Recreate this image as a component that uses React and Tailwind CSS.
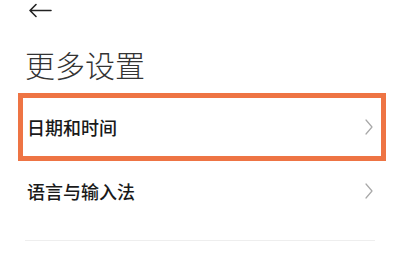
const font = { fontFamily: '"Noto Sans CJK SC", "Noto Sans", sans-serif' };

function Chevron() {
  return (
    <svg width="8" height="16" viewBox="0 0 8 16" fill="none">
      <path d="M1 1l6 7-6 7" stroke="#a8a8a8" strokeWidth="1.2" strokeLinecap="round" strokeLinejoin="round" />
    </svg>
  );
}

export default function App() {
  return (
    <div className="w-[400px] h-[277px] bg-white overflow-hidden" style={font}>
      {/* Back arrow */}
      <div className="pl-[28px] pt-[3px] h-[18px]">
        <svg width="24" height="15" viewBox="0 0 24 15" fill="none">
          <path d="M23 7.5H2M8 1.5L2 7.5l6 6" stroke="#222" strokeWidth="1.6" strokeLinecap="round" strokeLinejoin="round" />
        </svg>
      </div>

      {/* Title */}
      <h1 className="pl-[25px] mt-[26px] text-[30px] leading-[40px] font-light text-[#333]">更多设置</h1>

      {/* Highlighted item */}
      <div className="mt-[9px] ml-[18px] w-[368px] h-[68px] border-[5px] border-[#ee7444] flex items-center justify-between pl-[4px] pr-[8px]">
        <span className="text-[18px] font-medium text-[#1a1a1a]">日期和时间</span>
        <Chevron />
      </div>

      {/* Second item */}
      <div className="ml-[27px] mr-[27px] h-[60px] flex items-center justify-between">
        <span className="text-[18px] font-medium text-[#1a1a1a]">语言与输入法</span>
        <Chevron />
      </div>

      {/* Divider */}
      <div className="mt-[19px] mx-[25px] h-px bg-[#eeeeee]" />
    </div>
  );
}
